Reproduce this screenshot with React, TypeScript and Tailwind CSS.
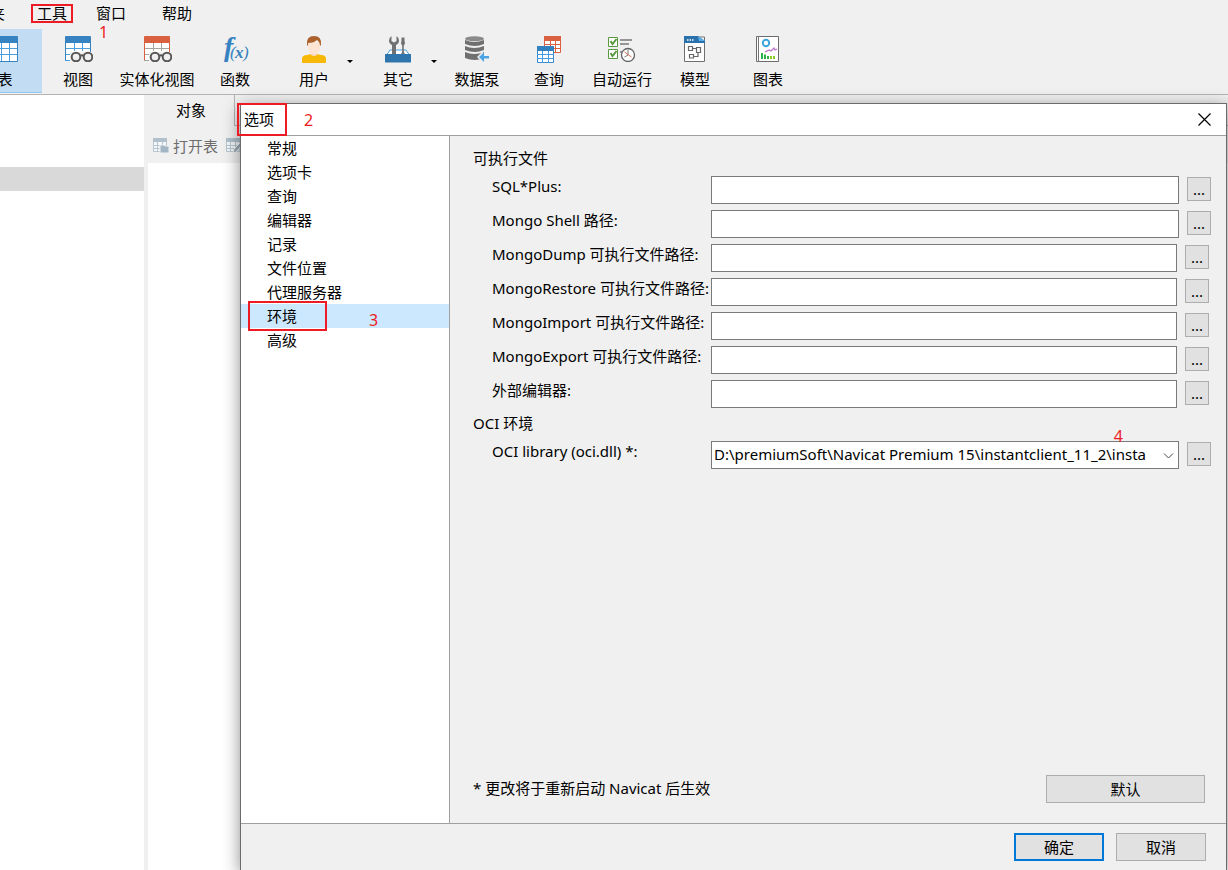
import type { JSX, ReactNode } from 'react';

/** Categories listed in the options dialog */
const categories = [
  '常规',
  '选项卡',
  '查询',
  '编辑器',
  '记录',
  '文件位置',
  '代理服务器',
  '环境',
  '高级',
];

/** Executable paths, wide rows reach a little further to the right */
const executables = [
  { id: 'sqlplus', label: 'SQL*Plus:', wide: true },
  { id: 'mongo-shell', label: 'Mongo Shell 路径:', wide: true },
  { id: 'mongo-dump', label: 'MongoDump 可执行文件路径:', wide: false },
  { id: 'mongo-restore', label: 'MongoRestore 可执行文件路径:', wide: false },
  { id: 'mongo-import', label: 'MongoImport 可执行文件路径:', wide: false },
  { id: 'mongo-export', label: 'MongoExport 可执行文件路径:', wide: false },
  { id: 'editor', label: '外部编辑器:', wide: false },
];

const TableIcon = ({ color, line }: { color: string; line: string }): JSX.Element => (
  <svg width="26" height="26" viewBox="0 0 26 26">
    <path d="M.5 1h25v24.500h-25z" fill="#fff" stroke={color} />
    <path d="M0 1q0-1 1-1h24q1 0 1 1v6H0z" fill={color} />
    <path d="M1 12.500h24M1 18.500h24M9.500 7v18M17.500 7v18" stroke={line} fill="none" />
  </svg>
);

/** Table with a pair of glasses in front of it */
const ViewIcon = ({ color, line }: { color: string; line: string }): JSX.Element => (
  <svg width="30" height="26" viewBox="-2 0 30 26">
    <path d="M0 7h26v9H5v9H0z" fill="#fff" />
    <path d="M0 1q0-1 1-1h24q1 0 1 1v6H0z" fill={color} />
    <path d="M.5 7v18M25.500 7v9" stroke={color} />
    <path d="M1 12.500h24M1 18.500h4M0 24.500h5M9.500 7v8M17.500 7v8" stroke={line} fill="none" />
    <g fill="#f0f0f0" stroke="#575757" strokeWidth="2">
      <circle cx="11" cy="21" r="4.300" />
      <circle cx="23" cy="21" r="4.300" />
      <path d="M15 20q2-1.500 4 0" fill="none" />
    </g>
  </svg>
);

const FunctionIcon = (): JSX.Element => (
  <svg width="30" height="28" viewBox="0 0 30 28">
    <g fill="#3782c0" fontStyle="italic" fontWeight="bold" fontFamily="Liberation Serif, serif">
      <text x="4" y="20" fontSize="28">f</text>
      <text x="10" y="22" fontSize="17" fontWeight="normal">(</text>
      <text x="15" y="22" fontSize="17">x</text>
      <text x="23" y="22" fontSize="17" fontWeight="normal">)</text>
    </g>
  </svg>
);

const UserIcon = (): JSX.Element => (
  <svg width="26" height="27" viewBox="0 0 26 27">
    <path d="M1 27v-4q0-4 5-4l4-1q3 2 6 0l4 1q5 0 5 4v4z" fill="#f8b808" />
    <path d="M10 15h6v4q-3 2-6 0z" fill="#f9d9c5" />
    <path d="M7 6h12v5q0 7-6 7t-6-7z" fill="#fde4d3" />
    <path d="M6 9Q5 0 13 0t7 9l-1 1q0-4-3-6-3 3-9 3v3z" fill="#ad622d" />
  </svg>
);

const ToolsIcon = (): JSX.Element => (
  <svg width="26" height="27" viewBox="0 0 26 27">
    <path d="M1 20l4-6h16l4 6" fill="#fff" stroke="#4b9fdd" />
    <path
      d="M6.500 0v5l2.500 1.500L11.500 5V0Q14 1.500 14 4.500 14 7.500 11 9v9H7V9Q4 7.500 4 4.500 4 1.500 6.500 0z"
      fill="#6f7173"
    />
    <path d="M16.500 1.500h3v3l.5 3-1.200 2v6l1 2.500h-3.600l1-2.500v-6l-1.200-2 .5-3z" fill="#6f7173" />
    <path d="M0 18h26v8q0 .5-1 .5H1q-1 0-1-.5z" fill="#2e75ae" />
  </svg>
);

const PumpIcon = (): JSX.Element => (
  <svg width="26" height="26" viewBox="0 0 26 26">
    <g fill="#707070">
      <path d="M1 4q9 4 19 0v4q-9 4-19 0z" />
      <path d="M1 10q9 4 19 0v4q-9 4-19 0z" />
      <path d="M1 16q9 4 19 0v6q-9 4-19 0z" />
      <ellipse cx="10.500" cy="2.700" rx="9.500" ry="2.500" fill="#8a8a8a" />
    </g>
    <path d="M13 21l6-6v3h6v6h-6v3z" fill="#f0f0f0" />
    <path d="M15 21l5-4.500V20h5v2.500h-5V26z" fill="#4ba3e6" />
  </svg>
);

const QueryIcon = (): JSX.Element => (
  <svg width="26" height="27" viewBox="0 0 26 27">
    <path d="M8.500 1h16v15.500h-16z" fill="#fff" stroke="#da6040" />
    <path d="M8 0h17v5H8z" fill="#d96140" />
    <path d="M8 8.500h17M8 12.500h17M14.500 5v12M19.500 5v12" stroke="#da6040" />
    <path d="M1.500 11h16v15.500h-16z" fill="#fff" stroke="#388ad0" />
    <path d="M1 10h17v5H1z" fill="#3280bd" />
    <path d="M1 18.500h17M1 22.500h17M6.500 15v12M12.500 15v12" stroke="#429be6" />
  </svg>
);

const AutomationIcon = (): JSX.Element => (
  <svg width="28" height="26" viewBox="0 0 28 26">
    <g fill="#fff" stroke="#5b993e">
      <path d="M.5 1.500h9v9h-9zM.5 13.500h9v9h-9z" />
      <path d="M2.500 5l2 3 4-5M2.500 17l2 3 4-5" fill="none" strokeWidth="2" />
    </g>
    <path d="M12 4h12M12 8h9M12 16h4" stroke="#969696" strokeWidth="2" />
    <circle cx="20" cy="19" r="6.500" fill="#fff" stroke="#626262" strokeWidth="1.300" />
    <path d="M20 13.500V19l-3.500 2" fill="none" stroke="#777" />
    <path d="M16.500 16l7 5" stroke="#d9725b" />
  </svg>
);

const ModelIcon = (): JSX.Element => (
  <svg width="22" height="26" viewBox="0 0 22 26">
    <path d="M.5 1h20v24.500H.5z" fill="#fff" stroke="#6f6f6f" />
    <path d="M0 0h14l7 5v2H0z" fill="#2b71ab" />
    <path d="M14 0l7 5h-6z" fill="#5aaeea" />
    <path d="M3 4h1.500M5.500 4H7M8 4h1.500" stroke="#fff" strokeWidth="1.500" />
    <path
      d="M4.500 10.500h4v4h-4zM12.500 11.500h4v5h-4zM5.500 18.500h4v3.500h-4zM8.500 12.500h4M9.500 20.500H14v-4"
      fill="none"
      stroke="#666"
      strokeWidth="1.200"
    />
  </svg>
);

const ChartIcon = (): JSX.Element => (
  <svg width="24" height="26" viewBox="0 0 24 26">
    <path d="M.5.500h22v25H.5z" fill="#fff" stroke="#6c6c6c" />
    <path d="M2.500 0v26" stroke="#777" />
    <circle cx="10" cy="7" r="3.200" fill="none" stroke="#3da4dd" strokeWidth="2" />
    <path d="M9 16l4-2 2 1 3-3 1 2 2-1" fill="none" stroke="#bd70cc" strokeWidth="1.300" />
    <path d="M6 17v6M9 18.500V23M12 20v3" stroke="#2eaf4a" strokeWidth="2" />
    <path d="M15 20v3M18 20v3" stroke="#8bcc27" strokeWidth="2" />
  </svg>
);

/** Faded table icon of the object toolbar */
const MutedTableIcon = ({ children }: { children: ReactNode }): JSX.Element => (
  <svg width="17" height="16" viewBox="0 0 17 16" className="shrink-0">
    <path d="M.5.500h13v13H.5z" fill="#f4f6f8" stroke="#b7c7d2" />
    <path d="M0 0h14v4H0z" fill="#b0c1cd" />
    <path d="M0 7.500h14M0 10.500h14M4.500 4v10M9.500 4v10" stroke="#b7c7d2" />
    {children}
  </svg>
);

interface ToolProps {
  label: string;
  icon: ReactNode;
  className: string;
  menu?: boolean;
}

/** Toolbar button with an icon above its label */
const Tool = ({ label, icon, className, menu }: ToolProps): JSX.Element => (
  <button
    type="button"
    className={`relative flex h-16 shrink-0 flex-col items-center pt-[7px] ${className}`}
  >
    <span className="flex h-7 items-start justify-center">{icon}</span>
    <span className="mt-[3px] leading-6 whitespace-nowrap">{label}</span>
    {menu && (
      <svg width="6" height="3" viewBox="0 0 6 3" className="absolute top-[31px] right-px">
        <path d="M0 0h6L3 3z" />
      </svg>
    )}
  </button>
);

const BrowseButton = ({ label }: { label: string }): JSX.Element => (
  <button
    type="button"
    aria-label={`浏览 ${label}`}
    className="mt-px flex h-6 w-6 shrink-0 items-center justify-center border border-[#adadad] bg-[#e1e1e1] leading-6"
  >
    ...
  </button>
);

/** Step number in red */
const Step = ({ n, className }: { n: number; className: string }): JSX.Element => (
  <span className={`pointer-events-none absolute text-base leading-4 text-[#ed1c24] ${className}`}>{n}</span>
);

const Dialog = (): JSX.Element => (
  <section
    role="dialog"
    aria-label="选项"
    className="absolute top-[103px] right-px bottom-0 left-60 flex flex-col border border-b-0 border-[#6b6b6b] bg-[#f0f0f0] shadow-[0_4px_16px_rgba(0,0,0,0.45)]"
  >
    <header className="flex h-8 shrink-0 items-center justify-between border-b border-[#a0a0a0] bg-white pr-[15px] pb-px pl-[3px]">
      <h1>选项</h1>
      <button type="button" aria-label="关闭">
        <svg width="13" height="13" viewBox="0 0 13 13" className="block">
          <path d="M.5.500l12 12M12.500.500l-12 12" stroke="#000" strokeWidth="1.200" />
        </svg>
      </button>
    </header>

    <div className="flex min-h-0 flex-1">
      <ul className="w-[209px] shrink-0 border-r border-[#a0a0a0] bg-white">
        {categories.map((name) => (
          <li key={name}>
            <button
              type="button"
              className={`block h-6 w-full pl-[26px] text-left leading-6 ${name === '环境' ? 'bg-[#cce8ff]' : ''}`}
            >
              {name}
            </button>
          </li>
        ))}
      </ul>

      <form className="flex min-w-0 flex-1 flex-col pt-3 pb-5 pl-[23px]">
        <h2 className="mb-2 leading-5">可执行文件</h2>
        <div className="flex flex-col gap-1.5">
          {executables.map(({ id, label, wide }) => (
            <div key={id} className={`flex items-start gap-2 ${wide ? 'pr-[15px]' : 'pr-[17px]'}`}>
              <div className="flex min-w-0 flex-1 items-start">
                <label htmlFor={id} className="w-[238px] shrink-0 overflow-hidden pl-[19px] leading-5 whitespace-nowrap">
                  {label}
                </label>
                <input id={id} type="text" className="h-7 min-w-0 flex-1 border border-[#7a7a7a] bg-white px-1" />
              </div>
              <BrowseButton label={label} />
            </div>
          ))}
        </div>

        <h2 className="mt-[5px] mb-2 leading-5">OCI 环境</h2>
        <div className="flex items-start gap-2 pr-[15px]">
          <div className="flex min-w-0 flex-1 items-start">
            <label htmlFor="oci" className="w-[238px] shrink-0 pl-[19px] leading-5 whitespace-nowrap">
              OCI library (oci.dll) *:
            </label>
            <div className="relative h-7 min-w-0 flex-1">
              <select id="oci" className="h-7 w-full appearance-none border border-[#7a7a7a] bg-white pr-[22px] pb-0.5 pl-0.5">
                <option>D:\premiumSoft\Navicat Premium 15\instantclient_11_2\insta</option>
              </select>
              <svg width="11" height="6" viewBox="0 0 11 6" className="pointer-events-none absolute top-3 right-[5px]">
                <path d="M1 .5l4.500 4.500L10 .5" fill="none" stroke="#444" />
              </svg>
            </div>
          </div>
          <BrowseButton label="OCI library" />
        </div>

        <div className="mt-auto flex items-center justify-between pr-[21px]">
          <p className="pb-0.5">* 更改将于重新启动 Navicat 后生效</p>
          <button type="button" className="h-7 w-[159px] border border-[#adadad] bg-[#e1e1e1]">
            默认
          </button>
        </div>
      </form>
    </div>

    <footer className="flex h-[47px] shrink-0 items-start justify-end gap-3 border-t border-[#a0a0a0] pt-[9px] pr-5">
      <button type="button" className="h-7 w-[90px] border-2 border-[#0078d7] bg-[#e1e1e1]">
        确定
      </button>
      <button type="button" className="h-7 w-[90px] border border-[#adadad] bg-[#e1e1e1]">
        取消
      </button>
    </footer>

    {/** Highlight frames and step numbers */}
    <span className="pointer-events-none absolute -top-px -left-1 h-[33px] w-[50px] border-2 border-[#ed1c24]" />
    <span className="pointer-events-none absolute top-[197px] left-[7px] h-[30px] w-[79px] border-2 border-[#ed1c24]" />
    <Step n={2} className="top-2 left-[63px]" />
    <Step n={3} className="top-[208px] left-32" />
    <Step n={4} className="top-[324px] right-[103px]" />
  </section>
);

const App = (): JSX.Element => (
  <div className="relative flex min-h-screen flex-col overflow-hidden bg-[#f0f0f0] font-['Noto_Sans','Noto_Sans_CJK_SC',sans-serif] text-[15px] leading-5 text-black">
    <nav className="relative flex h-[29px] shrink-0 items-start pt-[3px]">
      <button type="button" className="-ml-2.5 w-[15px]">夹</button>
      <button type="button" className="mt-px ml-[26px] flex h-[19px] w-[42px] items-center justify-center border-2 border-[#ed1c24] pb-0.5 leading-4">
        工具
      </button>
      <button type="button" className="ml-[23px]">窗口</button>
      <button type="button" className="ml-9">帮助</button>
      <Step n={1} className="top-6 left-[99px]" />
    </nav>

    <div className="flex h-[66px] shrink-0 border-b border-[#b4b4b4]">
      <Tool label="表" icon={<TableIcon color="#3782c0" line="#4b9fdd" />} className="-ml-8 w-[74px] border-b border-[#91c9f2] bg-[#c2ddf3]" />
      <Tool label="视图" icon={<ViewIcon color="#3782c0" line="#4b9fdd" />} className="w-[72px]" />
      <Tool label="实体化视图" icon={<ViewIcon color="#d96140" line="#a5a5a0" />} className="w-[86px]" />
      <Tool label="函数" icon={<FunctionIcon />} className="w-[70px]" />
      <Tool label="用户" icon={<UserIcon />} className="ml-1 w-20" menu />
      <Tool label="其它" icon={<ToolsIcon />} className="ml-1 w-20" menu />
      <Tool label="数据泵" icon={<PumpIcon />} className="w-[78px]" />
      <Tool label="查询" icon={<QueryIcon />} className="w-[66px]" />
      <Tool label="自动运行" icon={<AutomationIcon />} className="w-20" />
      <Tool label="模型" icon={<ModelIcon />} className="w-[66px]" />
      <Tool label="图表" icon={<ChartIcon />} className="w-20" />
    </div>

    <main className="flex flex-1">
      <aside className="w-36 shrink-0 bg-white pt-[72px]">
        <div className="h-6 bg-[#d9d9d9]" />
      </aside>
      <div className="ml-1 flex min-w-0 flex-1 flex-col">
        <div className="flex h-[31px] shrink-0">
          <button type="button" className="w-[86px] pb-0.5">对象</button>
          <div className="flex-1 border-b border-l border-[#b4b4b4]" />
        </div>
        <div className="flex h-[37px] shrink-0 items-center gap-2 pt-[3px] pl-[5px] text-[#6d6d6d]">
          <button type="button" className="flex items-center gap-[3px]">
            <MutedTableIcon>
              <path d="M7 7h4l1 1h4v7H7z" fill="#a2b6c5" stroke="#f0f0f0" />
            </MutedTableIcon>
            打开表
          </button>
          <button type="button" aria-label="设计表">
            <MutedTableIcon>
              <path d="M7 15l1-4 6-6 2 2-6 7z" fill="#96a9b8" stroke="#f0f0f0" />
            </MutedTableIcon>
          </button>
        </div>
        <div className="flex-1 bg-white" />
      </div>
    </main>

    <Dialog />
  </div>
);

export default App;
